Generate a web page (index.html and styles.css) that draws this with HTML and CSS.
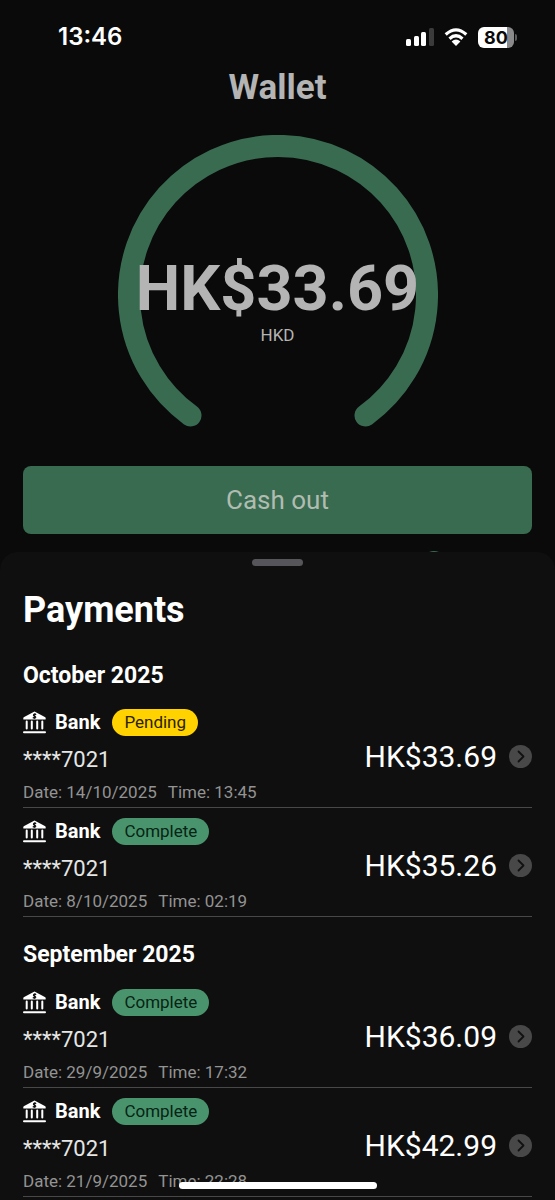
FILE: index.html
```html
<!DOCTYPE html>
<html lang="en">
<head>
<meta charset="utf-8">
<meta name="viewport" content="width=device-width, initial-scale=1">
<title>Wallet</title>
<link rel="stylesheet" href="styles.css">
</head>
<body>
<svg class="defs" aria-hidden="true">
  <symbol id="bank" viewBox="0 0 23 23">
    <path d="M11.500 .5 22.300 6.300Q23 7 22.600 8.500H.4Q0 7 .7 6.300Z" fill="#fff"/>
    <path d="M13.200 3.600C12.500 2.900 10.400 2.900 10.400 4.200S12.800 4.900 12.800 6.200 10.600 7.300 9.800 6.500M12 2.200 11.200 7.800" fill="none" stroke="#0f0f0f" stroke-width="1.100"/>
    <path d="M3.700 10.500V17.500M8.800 10.500V17.500M14.200 10.500V17.500M19.300 10.500V17.500" stroke="#fff" stroke-width="2" stroke-linecap="round"/>
    <path d="M1 21.200H22" stroke="#fff" stroke-width="2" stroke-linecap="round"/>
  </symbol>
  <symbol id="next" viewBox="0 0 23 23">
    <circle cx="11.500" cy="11.500" r="11.500" fill="#484848"/>
    <path d="M9.500 6.500 14.500 11.500 9.500 16.500" fill="none" stroke="#111" stroke-width="1.800" stroke-linecap="round" stroke-linejoin="round"/>
  </symbol>
</svg>
<div class="status">
  <span class="clock">13:46</span>
  <div class="status-icons">
    <svg width="28" height="18" viewBox="0 0 28 18" aria-hidden="true">
      <rect x="0" y="11" width="5" height="7" rx="1.500" fill="#fff"/>
      <rect x="8" y="8" width="5" height="10" rx="1.500" fill="#fff"/>
      <rect x="15" y="4" width="5" height="14" rx="1.500" fill="#fff"/>
      <rect x="23" y="0" width="5" height="18" rx="1.500" fill="#3b3b3b"/>
    </svg>
    <svg width="24" height="18" viewBox="0 0 24 18" aria-hidden="true">
      <path d="M1.700 6.500Q12-2.800 22.300 6.500M5.500 10.700Q12 4.800 18.500 10.700" fill="none" stroke="#fff" stroke-width="3.200"/>
      <path d="M7.600 13.400Q12 9.800 16.400 13.400L12 18Z" fill="#fff"/>
    </svg>
    <div class="battery"><span class="battery-level">80</span></div>
  </div>
</div>
<main class="wallet">
  <h1 class="title">Wallet</h1>
  <div class="gauge">
    <svg class="gauge-ring" viewBox="0 0 320 292" aria-hidden="true">
      <path d="M72.500 280.500A149 149 0 1 1 247.500 280.500" fill="none" stroke="#396b50" stroke-width="22" stroke-linecap="round"/>
    </svg>
    <div class="gauge-text">
      <span class="balance">HK$33.69</span>
      <span class="currency">HKD</span>
    </div>
  </div>
  <button class="cash-out" type="button">Cash out</button>
  <div class="hint"><span class="hint-ring"></span></div>
</main>
<section class="sheet">
  <span class="handle"></span>
  <h2 class="heading">Payments</h2>
  <h3 class="month">October 2025</h3>
  <article class="payment">
    <div class="details">
      <div class="method"><svg class="icon"><use href="#bank"/></svg><b class="name">Bank</b><span class="badge pending">Pending</span></div>
      <div class="account">****7021</div>
      <div class="when"><span>Date: 14/10/2025</span><span>Time: 13:45</span></div>
    </div>
    <span class="amount">HK$33.69</span>
    <button class="open" type="button" aria-label="Open payment"><svg class="icon"><use href="#next"/></svg></button>
  </article>
  <article class="payment">
    <div class="details">
      <div class="method"><svg class="icon"><use href="#bank"/></svg><b class="name">Bank</b><span class="badge">Complete</span></div>
      <div class="account">****7021</div>
      <div class="when"><span>Date: 8/10/2025</span><span>Time: 02:19</span></div>
    </div>
    <span class="amount">HK$35.26</span>
    <button class="open" type="button" aria-label="Open payment"><svg class="icon"><use href="#next"/></svg></button>
  </article>
  <h3 class="month">September 2025</h3>
  <article class="payment">
    <div class="details">
      <div class="method"><svg class="icon"><use href="#bank"/></svg><b class="name">Bank</b><span class="badge">Complete</span></div>
      <div class="account">****7021</div>
      <div class="when"><span>Date: 29/9/2025</span><span>Time: 17:32</span></div>
    </div>
    <span class="amount">HK$36.09</span>
    <button class="open" type="button" aria-label="Open payment"><svg class="icon"><use href="#next"/></svg></button>
  </article>
  <article class="payment">
    <div class="details">
      <div class="method"><svg class="icon"><use href="#bank"/></svg><b class="name">Bank</b><span class="badge">Complete</span></div>
      <div class="account">****7021</div>
      <div class="when"><span>Date: 21/9/2025</span><span>Time: 22:28</span></div>
    </div>
    <span class="amount">HK$42.99</span>
    <button class="open" type="button" aria-label="Open payment"><svg class="icon"><use href="#next"/></svg></button>
  </article>
</section>
<div class="home-bar"></div>
</body>
</html>
```
FILE: styles.css
```css
* { box-sizing: border-box; }

body {
  margin: 0;
  min-height: 100vh;
  display: flex;
  flex-direction: column;
  background: #0a0a0a;
  color: #fff;
  font-family: Roboto, "Noto Sans", sans-serif;
}

h1, h2, h3 { margin: 0; }

button {
  border: 0;
  padding: 0;
  background: none;
  font-family: inherit;
}

.defs { position: absolute; width: 0; height: 0; }

.icon { display: block; flex: none; width: 23px; height: 23px; }

.status {
  display: flex;
  justify-content: space-between;
  align-items: center;
  padding: 22px 41px 0 58px;
}

.clock {
  font: 600 24px/30px Inter, sans-serif;
}

.status-icons { display: flex; align-items: center; gap: 10px; }

.battery {
  position: relative;
  width: 36px;
  height: 21px;
  border-radius: 6px;
  background: linear-gradient(to right, #fff 80%, #8a8a8a 80%);
  color: #0a0a0a;
  text-align: center;
}

.battery-level { display: block; font: 700 18px/21px Inter, sans-serif; }

.battery::after {
  content: "";
  position: absolute;
  left: 37px;
  top: 7px;
  width: 2px;
  height: 7px;
  border-radius: 0 2px 2px 0;
  background: #5c5c5c;
}

.wallet {
  display: flex;
  flex-direction: column;
  padding: 16px 23px 0;
}

.title {
  color: #b4b4b4;
  font-size: 35px;
  line-height: 40px;
  text-align: center;
}

.gauge {
  display: grid;
  justify-items: center;
  margin-top: 27px;
}

.gauge-ring { grid-area: 1 / 1; width: 320px; height: 292px; }

.gauge-text {
  grid-area: 1 / 1;
  display: flex;
  flex-direction: column;
  align-items: center;
  padding-top: 119px;
  color: #b4b4b4;
}

.balance { font-size: 63px; font-weight: 700; line-height: 70px; }

.currency { font-size: 17px; line-height: 22px; }

.cash-out {
  height: 68px;
  margin-top: 39px;
  border-radius: 8px;
  background: #396b50;
  color: #b1bcb1;
  font-size: 26px;
}

.hint {
  display: flex;
  justify-content: flex-end;
  height: 18px;
  padding: 17px 87px 0 0;
}

.hint-ring {
  flex: none;
  width: 22px;
  height: 22px;
  border: 2px solid #396b50;
  border-radius: 50%;
}

.sheet {
  position: relative;
  flex: 1;
  display: flex;
  flex-direction: column;
  padding: 7px 23px 3px;
  border-radius: 18px 18px 0 0;
  background: #0f0f0f;
}

.handle {
  align-self: center;
  width: 51px;
  height: 7px;
  border-radius: 4px;
  background: #56565a;
}

.heading { margin-top: 22px; font-size: 36px; line-height: 44px; }

.month { padding: 22px 0 8px; font-size: 23px; line-height: 32px; }

.heading + .month { padding: 28px 0 7px; }

.payment {
  display: flex;
  align-items: center;
  gap: 12px;
  padding: 10px 0 3px;
  border-bottom: 1px solid #484848;
}

.details { flex: 1; }

.method { display: flex; align-items: center; }

.name { margin: 0 12px 0 9px; font-size: 20px; line-height: 27px; }

.badge {
  padding: 0 12px;
  border-radius: 14px;
  background: #4a946d;
  color: #062414;
  font-size: 17px;
  line-height: 27px;
}

.pending { background: #ffd200; color: #2b2205; }

.account { margin: 9px 0 5px; color: #e6e6e6; font-size: 22px; line-height: 30px; }

.when {
  display: flex;
  gap: 11px;
  color: #939393;
  font-size: 17px;
  line-height: 24px;
}

.amount { font-size: 30px; line-height: 36px; }

.home-bar {
  position: fixed;
  left: 50%;
  bottom: 11px;
  width: 198px;
  height: 7px;
  margin-left: -99px;
  border-radius: 4px;
  background: #fff;
}
```
